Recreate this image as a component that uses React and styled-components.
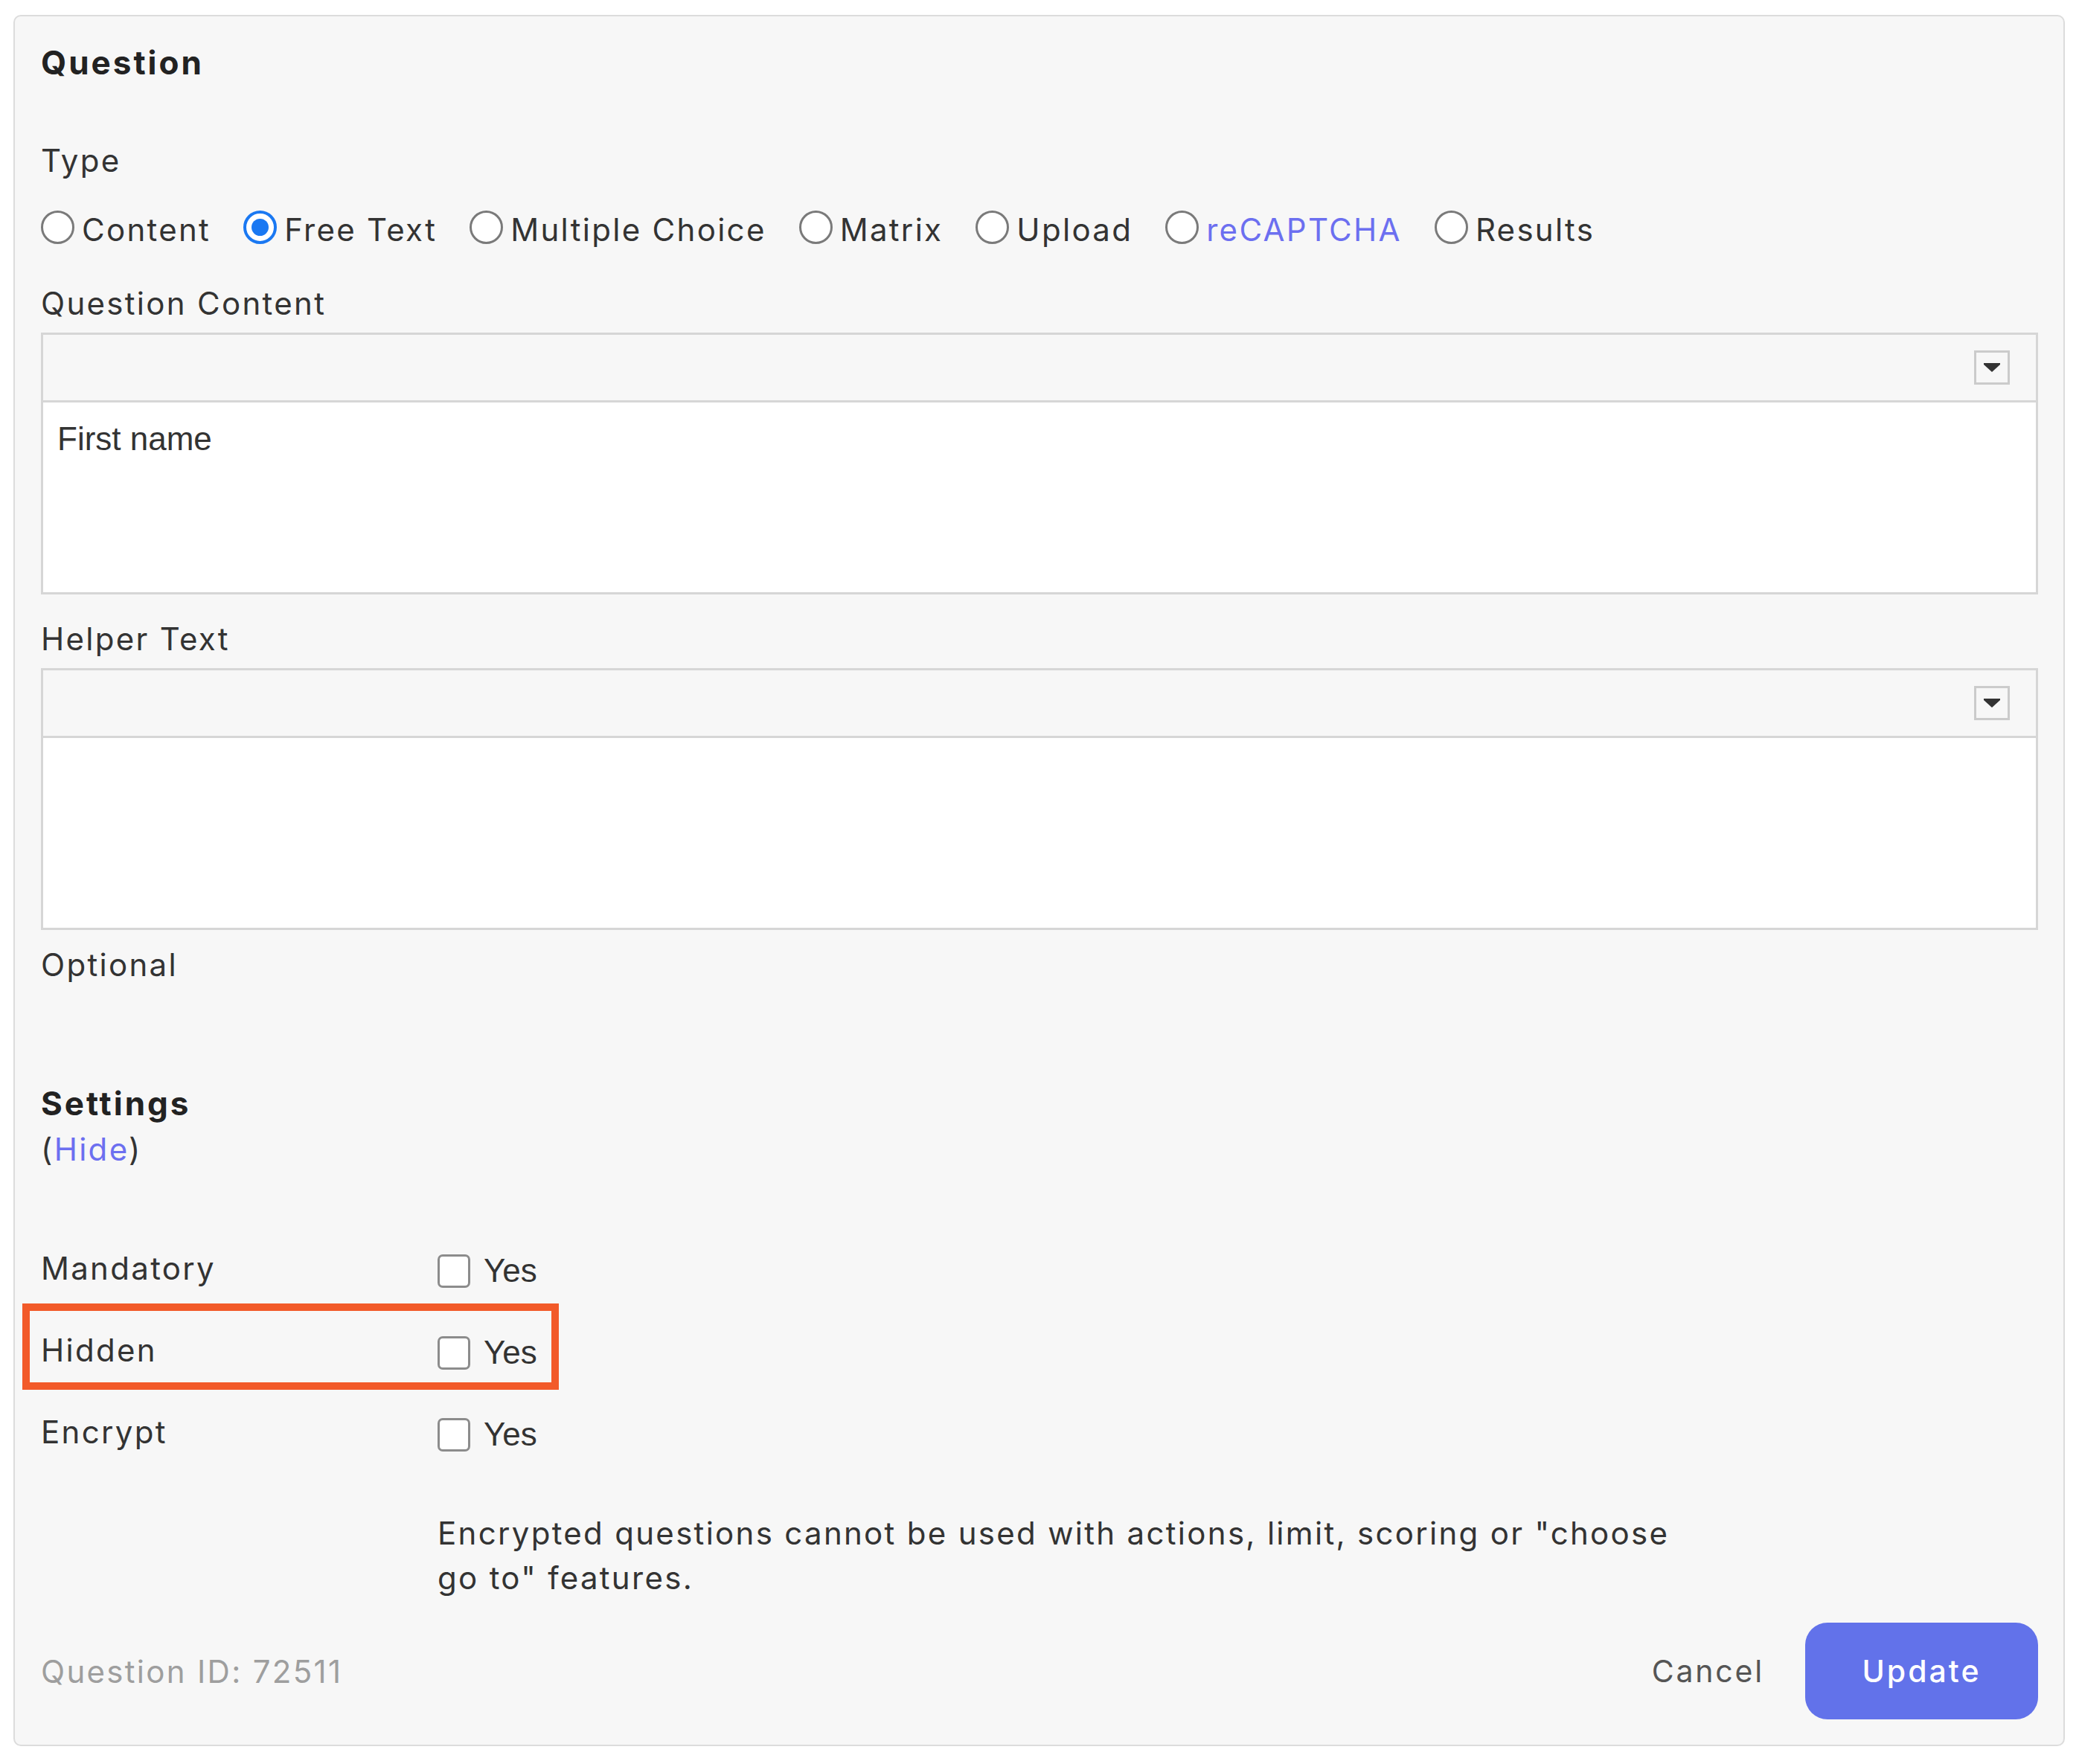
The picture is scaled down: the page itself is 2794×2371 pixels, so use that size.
import React from "react";
import styled, { createGlobalStyle } from "styled-components";

const GlobalStyle = createGlobalStyle`
  html, body { margin: 0; padding: 0; background: #ffffff; }
  body {
    font-family: Inter, "Noto Sans", sans-serif;
    color: #333333;
    -webkit-font-smoothing: antialiased;
  }
  *, *::before, *::after { box-sizing: border-box; }
`;

const Page = styled.div`
  width: 2794px;
  padding: 20px 19px 23px 18px;
`;

const Card = styled.div`
  background: #f7f7f7;
  border: 2px solid #dcdcdc;
  border-radius: 10px;
  padding: 32px 34px 34px 35px;
  display: flex;
  flex-direction: column;
`;

const Heading = styled.div`
  font-size: 44px;
  line-height: 60px;
  font-weight: 700;
  letter-spacing: 3px;
  color: #222222;
  margin-top: ${(p) => p.$mt || 0}px;
`;

const Label = styled.div`
  font-size: 42px;
  line-height: 60px;
  letter-spacing: 2.3px;
  color: #333333;
  margin-top: ${(p) => p.$mt || 0}px;
`;

const LinkText = styled.span`
  color: #6c6ff0;
`;

const RadioRow = styled.div`
  display: flex;
  align-items: center;
  height: 60px;
  margin-top: 32px;
`;

const RadioItem = styled.label`
  display: flex;
  align-items: center;
  margin-right: 44px;
  font-size: 42px;
  letter-spacing: 2.3px;
  color: ${(p) => (p.$link ? "#6c6ff0" : "#333333")};
`;

const RadioCircle = styled.span`
  width: 45px;
  height: 45px;
  border-radius: 50%;
  flex: none;
  margin-right: 10px;
  margin-top: -6px;
  background: #ffffff;
  border: ${(p) => (p.$checked ? "4px solid #1a78f2" : "3px solid #7a7a7a")};
  display: flex;
  align-items: center;
  justify-content: center;
  &::after {
    content: "";
    display: ${(p) => (p.$checked ? "block" : "none")};
    width: 23px;
    height: 23px;
    border-radius: 50%;
    background: #1a78f2;
  }
`;

const Editor = styled.div`
  margin-top: 9px;
  height: 352px;
  border: 3px solid #d6d6d6;
  background: #ffffff;
  display: flex;
  flex-direction: column;
`;

const EditorToolbar = styled.div`
  height: 91px;
  flex: none;
  background: #f7f7f7;
  border-bottom: 3px solid #d6d6d6;
  display: flex;
  align-items: center;
  justify-content: flex-end;
  padding-right: 35px;
`;

const DropButton = styled.span`
  width: 48px;
  height: 46px;
  border: 3px solid #cbcbcb;
  background: #f7f7f7;
  display: flex;
  align-items: center;
  justify-content: center;
`;

const EditorBody = styled.div`
  flex: 1;
  padding: 19px 19px;
  font-family: "Liberation Sans", Arial, sans-serif;
  font-size: 44px;
  line-height: 60px;
  color: #333333;
`;

const SettingsList = styled.div`
  margin-top: 99px;
  display: flex;
  flex-direction: column;
  gap: 50px;
`;

const SettingRow = styled.div`
  position: relative;
  display: grid;
  grid-template-columns: 533px 1fr;
  align-items: center;
  height: 60px;
  font-size: 42px;
  letter-spacing: 2.3px;
  ${(p) =>
    p.$highlight &&
    `
    &::after {
      content: "";
      position: absolute;
      left: -25px;
      top: -32px;
      width: 721px;
      height: 116px;
      border: 10px solid #f25a29;
      pointer-events: none;
    }
  `}
`;

const CheckField = styled.label`
  display: flex;
  align-items: center;
  margin-top: 8px;
  font-family: "Liberation Sans", Arial, sans-serif;
  font-size: 44px;
  letter-spacing: 0;
  color: #333333;
`;

const CheckBox = styled.span`
  width: 44px;
  height: 45px;
  flex: none;
  border: 3px solid #8c8c8c;
  border-radius: 7px;
  background: #ffffff;
  margin-right: 18px;
`;

const Note = styled.div`
  margin-top: 77px;
  margin-left: 533px;
  max-width: 1710px;
  font-size: 42px;
  line-height: 60px;
  letter-spacing: 2.3px;
  color: #333333;
`;

const Footer = styled.div`
  margin-top: 30px;
  display: flex;
  align-items: center;
  justify-content: space-between;
  height: 130px;
`;

const QuestionId = styled.div`
  font-size: 42px;
  letter-spacing: 2.3px;
  color: #9e9e9e;
`;

const Actions = styled.div`
  display: flex;
  align-items: center;
`;

const CancelButton = styled.button`
  border: none;
  background: none;
  font-family: inherit;
  font-size: 41px;
  letter-spacing: 2.8px;
  color: #555555;
  margin-right: 55px;
  padding: 0;
`;

const UpdateButton = styled.button`
  width: 313px;
  height: 130px;
  border: none;
  border-radius: 30px;
  background: #6272ea;
  color: #ffffff;
  font-family: inherit;
  font-size: 41px;
  font-weight: 500;
  letter-spacing: 3px;
`;

const Caret = () => (
  <svg width="22" height="12" viewBox="0 0 22 12">
    <path d="M0 0 H22 V2 L11 12 L0 2 Z" fill="#333" />
  </svg>
);

const RichEditor = ({ children }) => (
  <Editor>
    <EditorToolbar>
      <DropButton>
        <Caret />
      </DropButton>
    </EditorToolbar>
    <EditorBody>{children}</EditorBody>
  </Editor>
);

const types = [
  { name: "Content" },
  { name: "Free Text", checked: true },
  { name: "Multiple Choice" },
  { name: "Matrix" },
  { name: "Upload" },
  { name: "reCAPTCHA", link: true },
  { name: "Results" },
];

export default function App() {
  return (
    <>
      <GlobalStyle />
      <Page>
        <Card>
          <Heading>Question</Heading>
          <Label $mt={72}>Type</Label>
          <RadioRow>
            {types.map((t) => (
              <RadioItem key={t.name} $link={t.link}>
                <RadioCircle $checked={t.checked} />
                {t.name}
              </RadioItem>
            ))}
          </RadioRow>
          <Label $mt={40}>Question Content</Label>
          <RichEditor>First name</RichEditor>
          <Label $mt={30}>Helper Text</Label>
          <RichEditor />
          <Label $mt={17}>Optional</Label>
          <Heading $mt={126}>Settings</Heading>
          <Label $mt={2}>
            (<LinkText>Hide</LinkText>)
          </Label>
          <SettingsList>
            <SettingRow>
              <span>Mandatory</span>
              <CheckField>
                <CheckBox />
                Yes
              </CheckField>
            </SettingRow>
            <SettingRow $highlight>
              <span>Hidden</span>
              <CheckField>
                <CheckBox />
                Yes
              </CheckField>
            </SettingRow>
            <SettingRow>
              <span>Encrypt</span>
              <CheckField>
                <CheckBox />
                Yes
              </CheckField>
            </SettingRow>
          </SettingsList>
          <Note>
            Encrypted questions cannot be used with actions, limit, scoring or
            "choose go to" features.
          </Note>
          <Footer>
            <QuestionId>Question ID: 72511</QuestionId>
            <Actions>
              <CancelButton>Cancel</CancelButton>
              <UpdateButton>Update</UpdateButton>
            </Actions>
          </Footer>
        </Card>
      </Page>
    </>
  );
}
